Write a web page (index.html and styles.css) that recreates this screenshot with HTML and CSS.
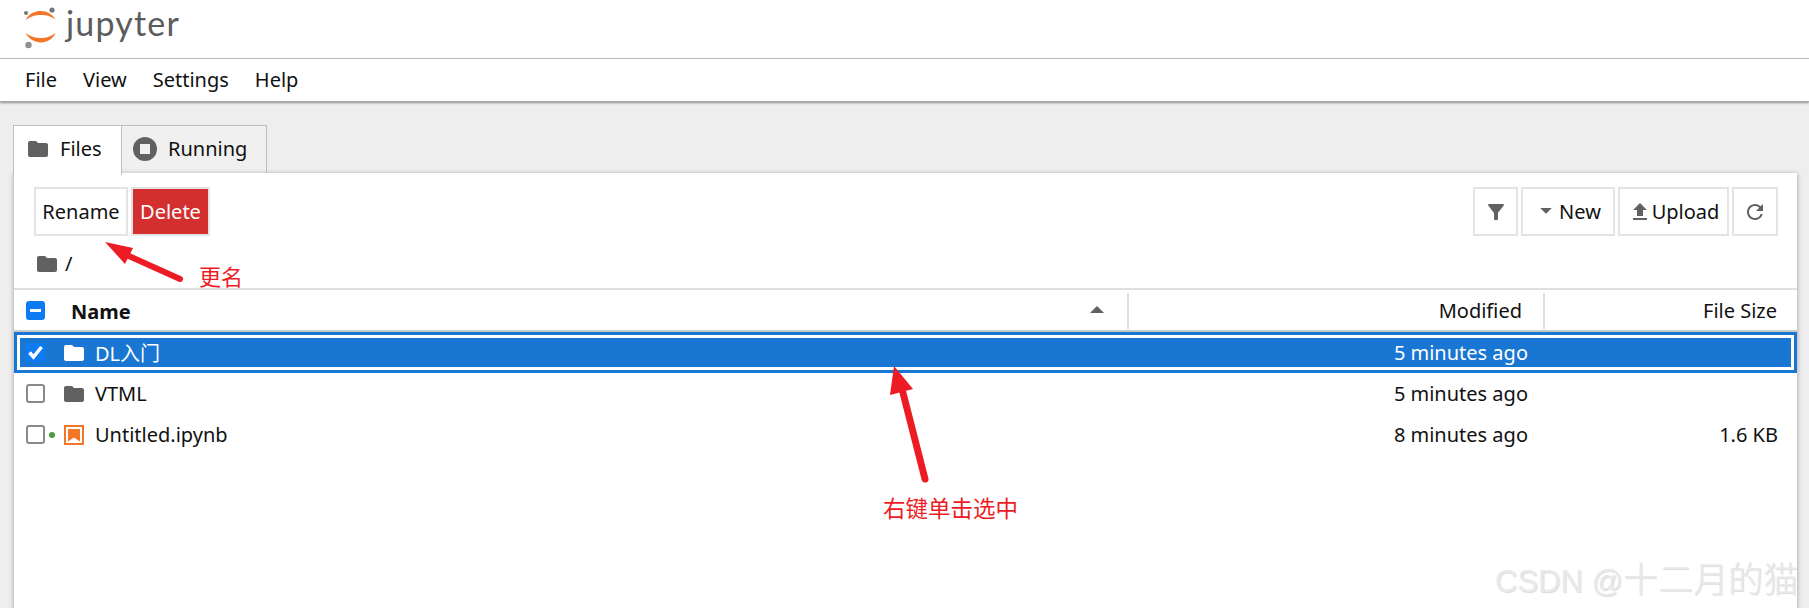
FILE: index.html
```html
<!DOCTYPE html>
<html lang="en">
<head>
<meta charset="utf-8">
<title>Jupyter</title>
<link rel="stylesheet" href="styles.css">
</head>
<body>
<header class="top">
  <svg class="logo" width="62" height="50" viewBox="0 0 62 50">
    <circle cx="52" cy="10" r="2.6" fill="#767677"/>
    <circle cx="26" cy="13" r="2" fill="#767677"/>
    <circle cx="28.5" cy="45" r="3.2" fill="#909090"/>
    <path d="M25.5 20C29 13.5 35 11 41 11s11 3 14.500 8.500C50 15.800 46 15 41 15s-10 1-15.500 5z" fill="#f37726"/>
    <path d="M25.500 33C29 39 35 42.500 41 42.500s12-3.500 14.500-9.500C50 37 46 38 41 38s-10-1-15.500-5z" fill="#f37726"/>
  </svg>
  <span class="wordmark">jupyter</span>
</header>
<nav class="menu">
  <span class="menu-item m1">File</span>
  <span class="menu-item m2">View</span>
  <span class="menu-item m3">Settings</span>
  <span class="menu-item m4">Help</span>
</nav>
<main class="main">
  <div class="tabs">
    <div class="tab tab-files">
      <svg class="ic" viewBox="0 0 24 24"><path d="M10 4H4c-1.100 0-2 .9-2 2v12c0 1.100.9 2 2 2h16c1.100 0 2-.9 2-2V8c0-1.100-.9-2-2-2h-8l-2-2z"/></svg>
      <span>Files</span>
    </div>
    <div class="tab tab-running">
      <svg class="ic" viewBox="0 0 24 24"><path fill-rule="evenodd" d="M12 0a12 12 0 1 0 0 24 12 12 0 0 0 0-24zM7 7h10v10H7z"/></svg>
      <span>Running</span>
    </div>
  </div>
  <section class="panel">
    <div class="toolbar">
      <button class="btn btn-rename">Rename</button>
      <button class="btn btn-delete">Delete</button>
      <span class="spacer"></span>
      <button class="btn btn-filter"><svg class="ic" viewBox="0 0 24 24"><path d="M4.250 5.610C6.270 8.200 10 13 10 13v6c0 .55.450 1 1 1h2c.550 0 1-.450 1-1v-6s3.720-4.800 5.740-7.390A1 1 0 0 0 18.950 4H5.040a1 1 0 0 0-.790 1.610z"/></svg></button>
      <button class="btn btn-new"><svg class="ic-caret" viewBox="0 0 10 6"><path d="M0 0h10L5 5z"/></svg>New</button>
      <button class="btn btn-upload"><svg class="ic" viewBox="0 0 24 24"><path d="M9 16h6v-6h4l-7-7-7 7h4zm-4 2h14v2H5z"/></svg>Upload</button>
      <button class="btn btn-refresh"><svg class="ic" viewBox="0 0 24 24"><path d="M17.650 6.350A7.960 7.960 0 0 0 12 4c-4.420 0-8 3.580-8 8s3.580 8 8 8c3.730 0 6.840-2.550 7.730-6h-2.080A6 6 0 0 1 12 18c-3.310 0-6-2.690-6-6s2.690-6 6-6c1.660 0 3.140.690 4.220 1.780L13 11h7V4l-2.350 2.350z"/></svg></button>
    </div>
    <div class="crumbs">
      <svg class="ic" viewBox="0 0 24 24"><path d="M10 4H4c-1.100 0-2 .9-2 2v12c0 1.100.9 2 2 2h16c1.100 0 2-.9 2-2V8c0-1.100-.9-2-2-2h-8l-2-2z"/></svg>
      <span>/</span>
    </div>
    <div class="list-head">
      <span class="cb cb-mixed"></span>
      <span class="col-name head-name">Name</span>
      <svg class="sort" viewBox="0 0 14 7"><path d="M7 0l7 7H0z"/></svg>
      <span class="col-mod head-cell">Modified</span>
      <span class="col-size head-cell">File Size</span>
    </div>
    <div class="row row-selected">
      <span class="cb cb-checked"><svg viewBox="0 0 19 19"><path d="M3.500 9.500l4 4.500 8-10" fill="none" stroke="#fff" stroke-width="3.500"/></svg></span>
      <svg class="ic file-ic" viewBox="0 0 24 24"><path d="M10 4H4c-1.100 0-2 .9-2 2v12c0 1.100.9 2 2 2h16c1.100 0 2-.9 2-2V8c0-1.100-.9-2-2-2h-8l-2-2z"/></svg>
      <span class="col-name">DL入门</span>
      <span class="col-mod">5 minutes ago</span>
      <span class="col-size"></span>
    </div>
    <div class="row">
      <span class="cb"></span>
      <svg class="ic file-ic" viewBox="0 0 24 24"><path d="M10 4H4c-1.100 0-2 .9-2 2v12c0 1.100.9 2 2 2h16c1.100 0 2-.9 2-2V8c0-1.100-.9-2-2-2h-8l-2-2z"/></svg>
      <span class="col-name">VTML</span>
      <span class="col-mod">5 minutes ago</span>
      <span class="col-size"></span>
    </div>
    <div class="row">
      <span class="cb"><i class="dot"></i></span>
      <svg class="nb-ic" viewBox="0 0 20 20"><path d="M0 0h20v20H0z" fill="#f37726"/><path d="M2 2h16v16H2z" fill="#fff"/><path d="M4 4h12v12.500l-6-4-6 4z" fill="#f37726"/></svg>
      <span class="col-name">Untitled.ipynb</span>
      <span class="col-mod">8 minutes ago</span>
      <span class="col-size">1.6 KB</span>
    </div>
  </section>
</main>

<svg class="arrows" width="1809" height="608" viewBox="0 0 1809 608">
  <path d="M120 252L180 279" stroke="#ed1c24" stroke-width="6" stroke-linecap="round" fill="none"/>
  <path d="M105 242L133 248L125 264z" fill="#ed1c24"/>
  <path d="M901 385L925 479" stroke="#ed1c24" stroke-width="7" stroke-linecap="round" fill="none"/>
  <path d="M894 366L913 389L890 395z" fill="#ed1c24"/>
</svg>
<span class="note note-rename">更名</span>
<span class="note note-select">右键单击选中</span>
<div class="watermark">CSDN @<span class="wm-cjk">十二月的猫</span></div>
</body>
</html>
```
FILE: styles.css
```css
* { box-sizing: border-box; }
html, body { margin: 0; padding: 0; }
body {
  width: 1809px;
  height: 608px;
  overflow: hidden;
  position: relative;
  background: #fff;
  color: #111;
  font-family: "Noto Sans", "Noto Sans CJK SC", sans-serif;
  font-size: 20px;
}
.top {
  height: 59px;
  border-bottom: 1px solid #bdbdbd;
  display: flex;
  align-items: flex-start;
}
.logo { flex: none; width: 62px; height: 50px; margin-top: 0; }
.wordmark {
  font-family: "Lato", sans-serif;
  font-size: 34px;
  line-height: 46px;
  letter-spacing: 1.200px;
  color: #5c5c5c;
  margin-left: 4px;
}
.menu {
  height: 43px;
  display: flex;
  align-items: center;
  padding: 0 0 2px 25px;
  border-bottom: 1px solid #a8a8a8;
  box-shadow: 0 1px 2px rgba(0, 0, 0, 0.4);
  position: relative;
}
.m1 { margin-right: 26px; }
.m2 { margin-right: 26px; }
.m3 { margin-right: 26px; }
.main {
  height: 506px;
  background: #eeeeee;
  padding: 23px 12px 0 14px;
}
.tabs { display: flex; height: 48px; margin-left: -1px; }
.tab {
  display: flex;
  align-items: center;
  height: 48px;
  padding-bottom: 2px;
  border: 1px solid #bdbdbd;
  border-bottom: 0;
  background: #f0f0f0;
}
.tab-files {
  width: 109px;
  background: #fff;
  padding-left: 12px;
  gap: 10px;
  position: relative;
  z-index: 2;
  height: 50px;
  padding-bottom: 4px;
}
.tab-running { width: 145px; border-left: 0; padding-left: 11px; gap: 11px; }
.ic { width: 24px; height: 24px; fill: #616161; flex: none; }
.panel {
  height: 436px;
  background: #fff;
  box-shadow: 0 1px 5px rgba(0, 0, 0, 0.35);
  position: relative;
}
.toolbar {
  display: flex;
  gap: 3px;
  padding: 14px 19px 0 20px;
  height: 63px;
}
.spacer { flex: 1; }
.btn {
  height: 49px;
  border: 2px solid #e4e4e4;
  background: #fff;
  color: #111;
  font: inherit;
  padding: 0;
  display: flex;
  align-items: center;
  justify-content: center;
}
.btn-rename { width: 94px; }
.btn-delete { width: 79px; background: #d32f2f; color: #fff; }
.btn-filter { width: 45px; }
.btn-new { width: 94px; gap: 7px; padding-left: 5px; }
.btn-upload { width: 111px; }
.btn-refresh { width: 46px; }
.ic-caret { width: 12px; height: 7px; fill: #616161; }
.crumbs {
  height: 54px;
  display: flex;
  align-items: center;
  gap: 6px;
  padding: 3px 0 0 21px;
  border-bottom: 2px solid #e0e0e0;
}
.list-head, .row {
  display: flex;
  align-items: center;
  position: relative;
  padding-left: 12px;
}
.list-head {
  height: 42px;
  border-bottom: 2px solid #c9c9c9;
}
.head-name, .head-cell { position: relative; top: 1px; }
.row { height: 41px; }
.row-selected {
  background: #1976d2;
  color: #fff;
  box-shadow: inset 0 0 0 3px #1976d2, inset 0 0 0 6px #fff;
}
.row-selected .file-ic { fill: #fff; }
.cb {
  flex: none;
  width: 19px;
  height: 19px;
  border: 2px solid #8a8a8a;
  border-radius: 3px;
  background: #fff;
  position: relative;
}
.cb-mixed { background: #0d7bf2; border-color: #0d7bf2; }
.cb-mixed::after {
  content: "";
  position: absolute;
  left: 2px;
  right: 2px;
  top: 6px;
  height: 3px;
  background: #fff;
}
.cb-checked { background: #0d7bf2; border-color: #0d7bf2; }
.cb-checked svg { position: absolute; left: -2px; top: -2px; width: 19px; height: 19px; display: block; }
.dot {
  position: absolute;
  left: 21px;
  top: 5px;
  width: 6px;
  height: 6px;
  border-radius: 50%;
  background: #4a9a3f;
}
.file-ic { margin-left: 17px; }
.nb-ic { flex: none; width: 20px; height: 20px; margin-left: 19px; margin-right: 2px; }
.row .col-name { margin-left: 9px; width: 1032px; }
.head-name { font-weight: 700; margin-left: 26px; width: 1019px; }
.sort { width: 14px; height: 7px; fill: #616161; flex: none; margin-right: 23px; margin-bottom: 2px; }
.col-mod { width: 401px; text-align: right; flex: none; }
.col-size { width: 250px; text-align: right; flex: none; }
.head-cell.col-mod {
  border-left: 2px solid #e0e0e0;
  width: 416px;
  padding-right: 21px;
  line-height: 36px;
}
.head-cell.col-size {
  border-left: 2px solid #e0e0e0;
  width: 253px;
  padding-right: 19px;
  line-height: 36px;
}
.arrows { position: absolute; left: 0; top: 0; pointer-events: none; }
.note {
  position: absolute;
  color: #ed1c24;
  font-family: "Noto Sans CJK SC", sans-serif;
  font-weight: 400;
  white-space: nowrap;
}
.note-rename { left: 199px; top: 259px; font-size: 22px; line-height: 32px; }
.note-select { left: 883px; top: 491px; font-size: 22.500px; line-height: 32px; }
.watermark {
  position: absolute;
  left: 1495px;
  top: 552px;
  width: 314px;
  white-space: nowrap;
  font-family: "Liberation Sans", "Noto Sans CJK SC", sans-serif;
  font-size: 31px;
  line-height: 50px;
  color: #e9e9e9;
  text-shadow: 1px 1px 1px rgba(0, 0, 0, 0.14);
}
.wm-cjk { font-family: "Noto Sans CJK SC", sans-serif; font-size: 35px; font-weight: 300; }
```
